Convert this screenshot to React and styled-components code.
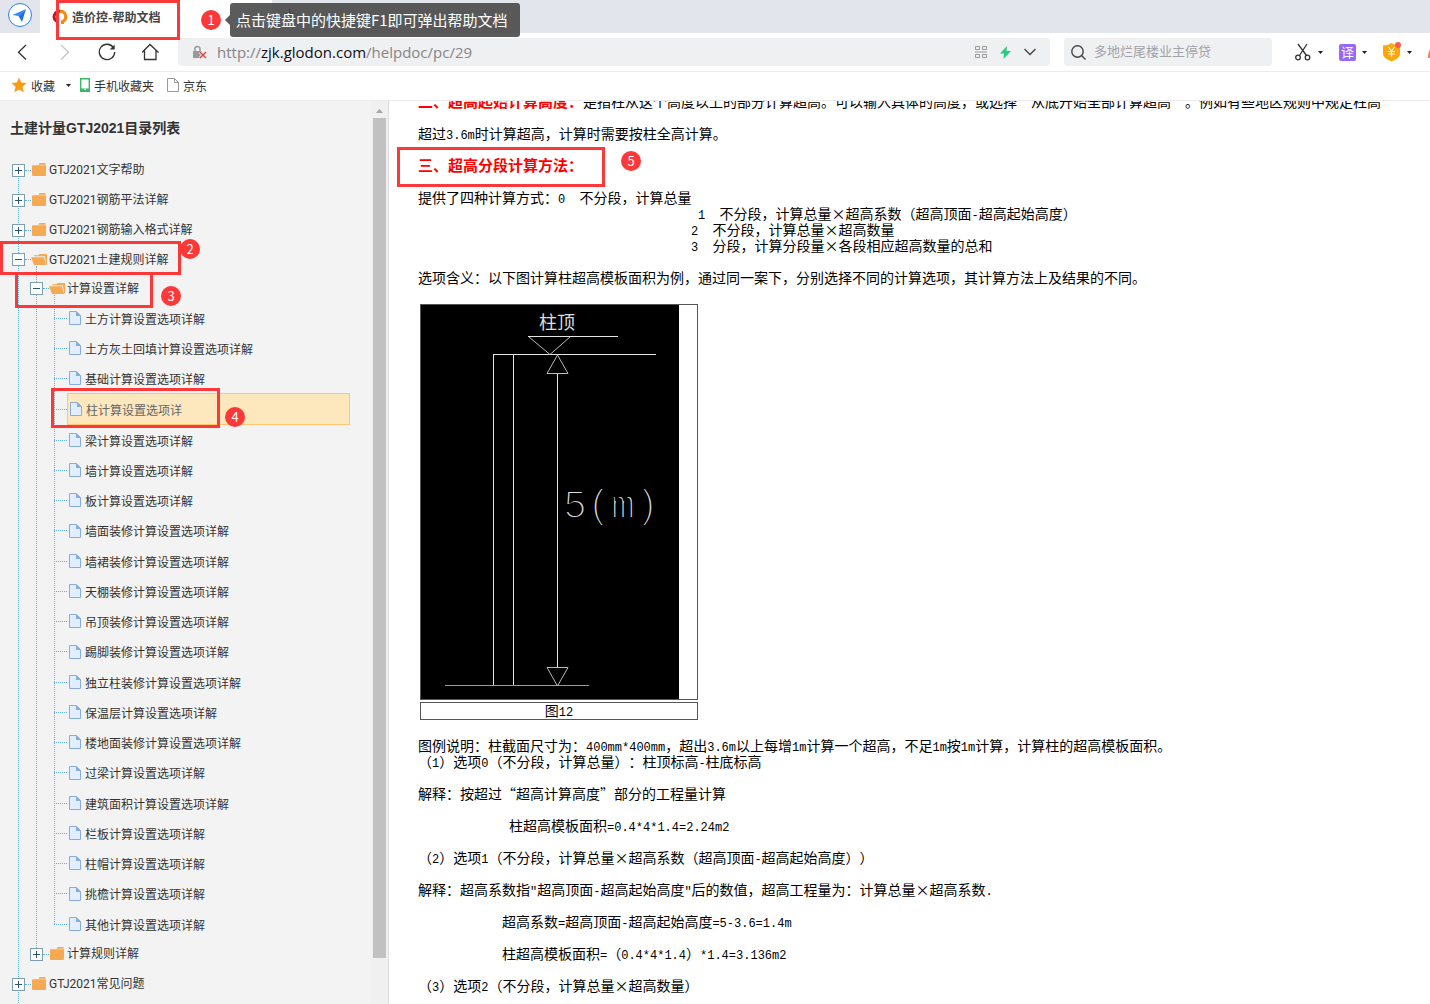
import React from 'react'
import styled, { createGlobalStyle } from 'styled-components'

const uiFont = `'Noto Sans CJK SC', sans-serif`
const line = '#5fb0d8'
const red = '#fc3838'

const GlobalStyle = createGlobalStyle`
  * {
    box-sizing: border-box;
  }

  body {
    margin: 0;
    color: #333;
    font-size: 12px;
    font-family: ${uiFont};
    background-color: #fff;
  }

  button {
    padding: 0;
    color: inherit;
    font: inherit;
    background: none;
    border: 0;
  }

  a {
    color: inherit;
    text-decoration: none;
  }

  svg {
    display: block;
    flex-shrink: 0;
  }
`

const Page = styled.div`
  position: relative;
  display: flex;
  flex-direction: column;
  height: 100vh;
  overflow: hidden;
`

/* browser chrome */

const TabBar = styled.div`
  display: flex;
  height: 33px;
  background-color: #e2e5eb;
`

const HomeBadge = styled.button`
  display: flex;
  justify-content: center;
  width: 40px;
  padding-top: 2px;
`

const Tab = styled.div`
  display: flex;
  align-items: center;
  width: 232px;
  padding-left: 12px;
  gap: 4px;
  color: #444;
  font-weight: 700;
  background-color: #fff;
`

const NewTab = styled.button`
  display: flex;
  padding: 9px 0 0 13px;
`

const Toolbar = styled.div`
  display: flex;
  align-items: center;
  height: 39px;
  padding-left: 14px;
  border-bottom: 1px solid #ebecee;
`

const NavButtons = styled.div`
  display: flex;
  gap: 26px;
  width: 164px;
  flex-shrink: 0;
`

const Field = styled.div`
  display: flex;
  align-items: center;
  height: 28px;
  background-color: #eff0f2;
  border-radius: 4px;
`

const Address = styled(Field)`
  flex: 1;
  min-width: 0;
  padding: 0 14px;
  gap: 10px;
`

const Url = styled.div`
  flex: 1;
  color: #858585;
  font-size: 15px;
  line-height: 20px;
  font-family: 'Open Sans', sans-serif;

  b {
    color: #111;
    font-weight: 400;
  }
`

const AddressTools = styled.div`
  display: flex;
  align-items: center;
  gap: 13px;
`

const Search = styled(Field)`
  width: 208px;
  margin-left: 14px;
  padding-left: 7px;
  gap: 8px;

  input {
    width: 160px;
    padding: 0 0 3px;
    font-size: 13px;
    font-family: ${uiFont};
    background: none;
    border: 0;
    outline: 0;
  }

  input::placeholder {
    color: #a2a3a8;
  }
`

const Extensions = styled.div`
  display: flex;
  align-items: center;
  width: 158px;
  padding-left: 23px;
  gap: 16px;
  overflow: hidden;
`

const Extension = styled.button`
  display: flex;
  align-items: center;
  gap: 6px;
  flex-shrink: 0;
`

const Translate = styled.span`
  width: 17px;
  height: 17px;
  color: #fff;
  font-size: 13px;
  line-height: 16px;
  background-color: #9768fb;
  border-radius: 2px;
`

const Bookmarks = styled.nav`
  display: flex;
  align-items: center;
  height: 29px;
  padding: 0 0 2px 11px;
  border-bottom: 1px solid #ebebeb;

  a {
    display: flex;
    align-items: center;
    gap: 4px;
    margin-right: 13px;
  }

  a + svg {
    margin: 0 9px 0 -2px;
  }
`

/* sidebar tree */

const Main = styled.div`
  display: flex;
  flex: 1;
  min-height: 0;
`

const Sidebar = styled.aside`
  display: flex;
  flex-shrink: 0;
  width: 389px;
  background-color: #f3f3f3;
  border-right: 1px solid #ddd;
`

const TreePane = styled.div`
  flex: 1;
  overflow: hidden;
`

const TreeTitle = styled.h1`
  margin: 17px 0 17px 10px;
  font-size: 14px;
  line-height: 20px;
  font-family: 'Liberation Sans', ${uiFont};
`

const Branch = styled.ul`
  position: relative;
  margin: 0;
  padding: 0 0 ${({ $root }) => ($root ? 30 : 0)}px
    ${({ $indent }) => $indent}px;
  list-style: none;

  &::before {
    position: absolute;
    top: ${({ $root }) => ($root ? 15 : -8)}px;
    bottom: ${({ $root }) => ($root ? 0 : 15)}px;
    left: ${({ $root }) => ($root ? 18 : 24)}px;
    border-left: 1px dotted ${line};
    content: '';
  }
`

const FolderRow = styled.div`
  display: flex;
  align-items: center;
  height: ${({ $open }) => ($open ? 29 : 30)}px;

  a {
    margin-left: 2px;
    line-height: 18px;
    font-family: Roboto, ${uiFont};
  }
`

const Toggle = styled.button`
  position: relative;
  width: 13px;
  height: 13px;
  background-color: #fff;
  border: 1px solid #7ba0b2;
`

const Dots = styled.span`
  width: ${({ $width }) => $width}px;
  border-top: 1px dotted ${line};
`

const LeafRow = styled.li`
  display: flex;
  align-items: center;
  height: ${({ $active }) => ($active ? 32 : 30)}px;

  &:nth-child(4n) {
    min-height: 31px;
  }
`

const LeafLink = styled.a`
  display: flex;
  align-items: center;
  flex: 1;
  gap: 4px;
  height: 100%;
  margin-right: 21px;
  padding-left: 2px;
  color: ${({ $active }) => ($active ? '#666' : 'inherit')};
  background-color: ${({ $active }) => ($active ? '#fde7bd' : 'transparent')};
  border: ${({ $active }) => ($active ? '1px solid #ffc671' : '0')};
`

const ScrollBar = styled.div`
  width: 17px;
  padding: 0 2px;
  background-color: #f0f0f0;

  svg {
    margin: 7px auto 5px;
  }
`

const Thumb = styled.div`
  height: 93%;
  background-color: #c1c1c1;
`

/* help document */

const Doc = styled.article`
  flex: 1;
  min-width: 0;
  padding-left: 29px;
  overflow: hidden;
  color: #000;
  font-size: 14px;
  white-space: nowrap;
  text-spacing-trim: space-all;
`

const Scrolled = styled.div`
  margin-top: -7px;
`

const Para = styled.p`
  margin: 0 0 16px;
`

const Row = styled.span`
  display: block;
  height: 16px;
  padding-left: ${({ $indent = 0 }) => $indent}px;
  line-height: 14px;
`

const Heading = styled.strong`
  color: #f00;
  font-size: 15px;
`

const Half = styled.span`
  font-size: 12px;
  font-family: 'Liberation Mono', monospace;
  white-space: pre;
`

const Figure = styled.table`
  width: 282px;
  margin: 0 0 16px;
  border-spacing: 2px;

  td {
    padding: 0;
    text-align: center;
    border: 1px solid #555;
  }
`

/* annotations over the page */

const Mark = styled.div`
  position: absolute;
  top: ${({ $y }) => $y}px;
  left: ${({ $x }) => $x}px;
  width: ${({ $w }) => $w}px;
  height: ${({ $h }) => $h}px;
  border: 3px solid ${red};
  pointer-events: none;
`

const Step = styled.div`
  position: absolute;
  top: ${({ $y }) => $y}px;
  left: ${({ $x }) => $x}px;
  width: 20px;
  height: 20px;
  color: #fff;
  font-size: 13px;
  line-height: 19px;
  text-align: center;
  background-color: ${red};
  border-radius: 50%;
`

const Tip = styled.div`
  position: absolute;
  top: 3px;
  left: 230px;
  padding: 0 12px 0 6px;
  color: #fff;
  font-size: 15px;
  line-height: 34px;
  background-color: rgba(68, 68, 68, 0.88);
  border-radius: 3px;

  &::before {
    position: absolute;
    top: 12px;
    left: -5px;
    border: 5px solid transparent;
    border-right-color: #58595b;
    border-left: 0;
    content: '';
  }
`

const Caret = () => (
  <svg width="5" height="3" viewBox="0 0 5 3">
    <path d="M0 0h5L2.5 3z" fill="#222" />
  </svg>
)

const FolderIcon = ({ open }) => (
  <svg width="16" height="14" viewBox="0 0 16 14" fill="#f5a952">
    {open ? (
      <>
        <path d="M3 2.200h4.500l.8-1.200H15a1 1 0 0 1 1 1v9.500h-.8L13.800 3.200H3z" />
        <path d="M0 4.200h13l2 7.800H3z" />
      </>
    ) : (
      <>
        <path d="M8.500 0h6v1.800H7.500z" />
        <path d="M1 3.300a1 1 0 0 1 1-1h13V12a1 1 0 0 1-1 1H2a1 1 0 0 1-1-1z" />
      </>
    )}
  </svg>
)

const FileIcon = () => (
  <svg width="12" height="14" viewBox="0 0 12 14">
    <path d="M.5.5h7l4 4v9H.5z" fill="#e0eeff" stroke="#88acdc" />
    <path d="M7 0l5 5H7z" fill="#88acdc" />
  </svg>
)

const leaves = [
  '土方计算设置选项详解',
  '土方灰土回填计算设置选项详解',
  '基础计算设置选项详解',
  '柱计算设置选项详',
  '梁计算设置选项详解',
  '墙计算设置选项详解',
  '板计算设置选项详解',
  '墙面装修计算设置选项详解',
  '墙裙装修计算设置选项详解',
  '天棚装修计算设置选项详解',
  '吊顶装修计算设置选项详解',
  '踢脚装修计算设置选项详解',
  '独立柱装修计算设置选项详解',
  '保温层计算设置选项详解',
  '楼地面装修计算设置选项详解',
  '过梁计算设置选项详解',
  '建筑面积计算设置选项详解',
  '栏板计算设置选项详解',
  '柱帽计算设置选项详解',
  '挑檐计算设置选项详解',
  '其他计算设置选项详解',
]

const activeLeaf = '柱计算设置选项详'

const Folder = ({ name, children }) => {
  const open = !!children

  return (
    <li>
      <FolderRow $open={open}>
        <Toggle aria-label={name} aria-expanded={open}>
          <svg width="11" height="11" viewBox="0 0 11 11" stroke="#2f5870">
            <path d={open ? 'M2 5.5h7' : 'M2 5.5h7M5.5 2v7'} />
          </svg>
        </Toggle>
        <Dots $width={6} />
        <FolderIcon open={open} />
        <a href="#folder">{name}</a>
      </FolderRow>
      {children}
    </li>
  )
}

const Tree = () => (
  <Branch $root $indent={12}>
    <Folder name="GTJ2021文字帮助" />
    <Folder name="GTJ2021钢筋平法详解" />
    <Folder name="GTJ2021钢筋输入格式详解" />
    <Folder name="GTJ2021土建规则详解">
      <Branch $indent={18}>
        <Folder name="计算设置详解">
          <Branch $indent={24}>
            {leaves.map((name) => (
              <LeafRow key={name} $active={name === activeLeaf}>
                <Dots $width={13} />
                <LeafLink href="#leaf" $active={name === activeLeaf}>
                  <FileIcon />
                  {name}
                </LeafLink>
              </LeafRow>
            ))}
          </Branch>
        </Folder>
        <Folder name="计算规则详解" />
      </Branch>
    </Folder>
    <Folder name="GTJ2021常见问题" />
  </Branch>
)

// latin runs are set in a half-width face, everything else in the CJK one
const Text = ({ children }) =>
  children
    .split(/([\x20-\x7e]+)/)
    .map((run, i) => (i % 2 ? <Half key={i}>{run}</Half> : run))

const Line = ({ indent, children }) => (
  <Row $indent={indent}>
    <Text>{children}</Text>
  </Row>
)

const ColumnDrawing = () => (
  <svg width="258" height="394" viewBox="0 0 258 394" fill="none" stroke="#e4e4e4">
    <path d="M0 0h258v394H0z" fill="#000" stroke="none" />
    <path d="M107 31.500h90M72 49.500h163M72.500 49v332M92.500 49v332M136.500 69v293" />
    <path d="M24 380.500h144" stroke="#999" />
    <path
      d="M108 32l21 17.500L149 32M136.500 50L126 68.500h21zM126 362.500h21L136.500 381z"
      stroke="#bbb"
    />
    <text x="118" y="24" fontSize="18" fill="#ddd" stroke="none">
      柱顶
    </text>
    <text
      x="142"
      y="213"
      fontSize="40"
      fontFamily="Liberation Mono"
      fill="#ddd"
      stroke="#000"
      strokeWidth="2"
    >
      5(m)
    </text>
  </svg>
)

const Chrome = () => (
  <header>
    <TabBar>
      <HomeBadge aria-label="首页">
        <svg width="26" height="26" viewBox="0 0 26 26">
          <circle cx="13" cy="13" r="11.500" fill="#fff" stroke="#2580f0" />
          <path d="M19 7L5.500 13l6 1z" fill="#2b8af5" />
          <path d="M19 7l-4 13-3.500-6z" fill="#1c6fe6" />
        </svg>
      </HomeBadge>
      <Tab>
        <svg width="16" height="16" viewBox="0 0 16 16" fill="none" strokeWidth="3">
          <path d="M8 2.200a5.500 5.500 0 0 0-3.500 10" stroke="#b3201d" />
          <path d="M8 2.200a5.500 5.500 0 0 1 2.500 10.500V15" stroke="#f28c0f" />
          <path d="M5 14h2" stroke="#e8431b" />
        </svg>
        造价控-帮助文档
      </Tab>
      <NewTab aria-label="新标签">
        <svg width="9" height="9" viewBox="0 0 9 9" stroke="#222">
          <path d="M0 4.500h9M4.500 0v9" />
        </svg>
      </NewTab>
    </TabBar>
    <Toolbar>
      <NavButtons>
        <button aria-label="后退">
          <svg width="16" height="18" viewBox="0 0 16 18" fill="none" stroke="#333" strokeWidth="1.300">
            <path d="M12 2L4.500 9.200 12 16.500" />
          </svg>
        </button>
        <button aria-label="前进">
          <svg width="16" height="18" viewBox="0 0 16 18" fill="none" stroke="#c6c6c6" strokeWidth="1.300">
            <path d="M5 2l7.500 7.200L5 16.500" />
          </svg>
        </button>
        <button aria-label="刷新">
          <svg width="18" height="18" viewBox="0 0 18 18" fill="none" stroke="#333" strokeWidth="1.300">
            <path d="M15.500 4.800A7.700 7.700 0 1 0 16.700 9" />
            <path d="M16.700 1.500v5h-5z" fill="#333" stroke="none" />
          </svg>
        </button>
        <button aria-label="主页">
          <svg width="18" height="18" viewBox="0 0 18 18" fill="none" stroke="#333" strokeWidth="1.300">
            <path d="M0 9.500L8 1.500l8.500 8M2.500 7.500v9h11.500v-9" />
          </svg>
        </button>
      </NavButtons>
      <Address>
        <svg width="15" height="14" viewBox="0 0 15 14">
          <path d="M1 6h9v7H1z" fill="#999" />
          <path d="M3 6V4.500a2.500 2.500 0 0 1 5-1V6" fill="none" stroke="#999" strokeWidth="1.500" />
          <path d="M8 7l6 6M14 7l-6 6" stroke="#eff0f2" strokeWidth="3" />
          <path d="M8 7l6 6M14 7l-6 6" stroke="#e23b3b" strokeWidth="1.400" />
        </svg>
        <Url>
          http://<b>zjk.glodon.com</b>/helpdoc/pc/29
        </Url>
        <AddressTools>
          <svg width="12" height="12" viewBox="0 0 12 12" fill="none" stroke="#999">
            <path d="M.5.5h4v3h-4zM7.500.5h4v3h-4zM.5 8.500h4v3h-4zM7.500 8.500h4v3h-4zM0 6h12" />
          </svg>
          <svg width="11" height="13" viewBox="0 0 11 13">
            <path d="M7 0L0 7.500h4L3.500 13 11 5H6.500z" fill="#21cf7c" />
          </svg>
          <svg width="12" height="8" viewBox="0 0 12 8" fill="none" stroke="#444" strokeWidth="1.400">
            <path d="M.5 1L6 6.500 11.500 1" />
          </svg>
        </AddressTools>
      </Address>
      <Search>
        <svg width="15" height="15" viewBox="0 0 15 15" fill="none" stroke="#444" strokeWidth="1.400">
          <circle cx="6.500" cy="6.500" r="5.700" />
          <path d="M10.500 10.500l4 4" />
        </svg>
        <input aria-label="搜索" placeholder="多地烂尾楼业主停贷" />
      </Search>
      <Extensions>
        <Extension aria-label="截图">
          <svg width="17" height="18" viewBox="0 0 17 18" fill="none" stroke="#333" strokeWidth="1.300">
            <path d="M3 1l8.500 11.500M12 1L4.500 12.500" />
            <circle cx="3" cy="14.500" r="2.300" />
            <circle cx="12.500" cy="14.500" r="2.300" />
          </svg>
          <Caret />
        </Extension>
        <Extension aria-label="翻译">
          <Translate>译</Translate>
          <Caret />
        </Extension>
        <Extension aria-label="钱包">
          <svg width="18" height="20" viewBox="0 0 18 20">
            <path d="M0 3.500Q5 3.500 8.500 1q3.500 2.500 8.500 2.500V12q0 4-8.500 7.500Q0 16 0 12z" fill="#fda50d" />
            <path
              d="M5.500 5l3 4 3-4M8.500 9v6M5 9.500h7M5 12h7"
              fill="none"
              stroke="#fff"
              strokeWidth="1.200"
            />
            <circle cx="15" cy="3" r="3" fill="#ff5b4d" />
          </svg>
          <Caret />
        </Extension>
        <Extension aria-label="热点">
          <svg width="14" height="16" viewBox="0 0 14 16">
            <path d="M6 1Q0 5 0 14h12z" fill="#f47a3a" />
          </svg>
        </Extension>
      </Extensions>
    </Toolbar>
    <Bookmarks>
      <a href="#fav">
        <svg width="16" height="16" viewBox="0 0 16 16">
          <path d="M8 .5l2.200 5 5.300.6-4 3.600 1.200 5.500L8 12.400l-4.700 2.800 1.200-5.500-4-3.600 5.300-.6z" fill="#fd9a10" />
        </svg>
        收藏
      </a>
      <Caret />
      <a href="#mobile">
        <svg width="10" height="14" viewBox="0 0 10 14">
          <path d="M.7.7h8.600v12.600H.7z" fill="#fff" stroke="#38b866" strokeWidth="1.400" />
          <path d="M1 10.500h8V13H1z" fill="#38b866" />
          <path d="M4 11.500h2" stroke="#fff" />
        </svg>
        手机收藏夹
      </a>
      <a href="#jd">
        <svg width="12" height="14" viewBox="0 0 12 14" fill="none" stroke="#999">
          <path d="M.5.5h7l4 4v9H.5zM7.500.5v4h4" />
        </svg>
        京东
      </a>
    </Bookmarks>
  </header>
)

const HelpDoc = () => (
  <Doc>
    <Scrolled>
      <Para>
        <Row>
          <Heading>二、超高起始计算高度：</Heading>
          是指柱从这个高度以上的部分计算超高。可以输入具体的高度，或选择“从底开始全部计算超高”。例如有些地区规则中规定柱高
        </Row>
      </Para>
      <Para>
        <Line>超过3.6m时计算超高，计算时需要按柱全高计算。</Line>
      </Para>
      <Para>
        <Row>
          <Heading>三、超高分段计算方法：</Heading>
        </Row>
      </Para>
      <Para>
        <Line>提供了四种计算方式：0  不分段，计算总量</Line>
        <Line indent={280}>1  不分段，计算总量×超高系数（超高顶面-超高起始高度）</Line>
        <Line indent={273}>2  不分段，计算总量×超高数量</Line>
        <Line indent={273}>3  分段，计算分段量×各段相应超高数量的总和</Line>
      </Para>
      <Para>
        <Line>
          选项含义：以下图计算柱超高模板面积为例，通过同一案下，分别选择不同的计算选项，其计算方法上及结果的不同。
        </Line>
      </Para>
      <Figure>
        <tbody>
          <tr>
            <td>
              <ColumnDrawing />
            </td>
          </tr>
          <tr>
            <td>
              <Line>图12</Line>
            </td>
          </tr>
        </tbody>
      </Figure>
      <Para>
        <Line>
          图例说明：柱截面尺寸为：400mm*400mm，超出3.6m以上每增1m计算一个超高，不足1m按1m计算，计算柱的超高模板面积。
        </Line>
        <Line>（1）选项0（不分段，计算总量）：柱顶标高-柱底标高</Line>
      </Para>
      <Para>
        <Line>解释：按超过“超高计算高度”部分的工程量计算</Line>
      </Para>
      <Para>
        <Line indent={91}>柱超高模板面积=0.4*4*1.4=2.24m2</Line>
      </Para>
      <Para>
        <Line>（2）选项1（不分段，计算总量×超高系数（超高顶面-超高起始高度））</Line>
      </Para>
      <Para>
        <Line>
          解释：超高系数指"超高顶面-超高起始高度"后的数值，超高工程量为：计算总量×超高系数.
        </Line>
      </Para>
      <Para>
        <Line indent={84}>超高系数=超高顶面-超高起始高度=5-3.6=1.4m</Line>
      </Para>
      <Para>
        <Line indent={84}>柱超高模板面积=（0.4*4*1.4）*1.4=3.136m2</Line>
      </Para>
      <Para>
        <Line>（3）选项2（不分段，计算总量×超高数量）</Line>
      </Para>
    </Scrolled>
  </Doc>
)

const App = () => (
  <>
    <GlobalStyle />
    <Page lang="zh-CN">
      <Chrome />
      <Main>
        <Sidebar>
          <TreePane>
            <TreeTitle>土建计量GTJ2021目录列表</TreeTitle>
            <Tree />
          </TreePane>
          <ScrollBar>
            <svg width="7" height="5" viewBox="0 0 7 5">
              <path d="M0 5l3.500-4L7 5z" fill="#a3a3a3" />
            </svg>
            <Thumb />
          </ScrollBar>
        </Sidebar>
        <HelpDoc />
      </Main>

      <Mark $x={56} $y={0} $w={124} $h={40} />
      <Mark $x={0} $y={241} $w={181} $h={34} />
      <Mark $x={15} $y={272} $w={138} $h={36} />
      <Mark $x={51} $y={388} $w={169} $h={40} />
      <Mark $x={397} $y={147} $w={208} $h={40} />
      <Step $x={201} $y={10}>1</Step>
      <Step $x={180} $y={239}>2</Step>
      <Step $x={161} $y={286}>3</Step>
      <Step $x={225} $y={407}>4</Step>
      <Step $x={621} $y={151}>5</Step>
      <Tip role="tooltip">点击键盘中的快捷键F1即可弹出帮助文档</Tip>
    </Page>
  </>
)

export default App
